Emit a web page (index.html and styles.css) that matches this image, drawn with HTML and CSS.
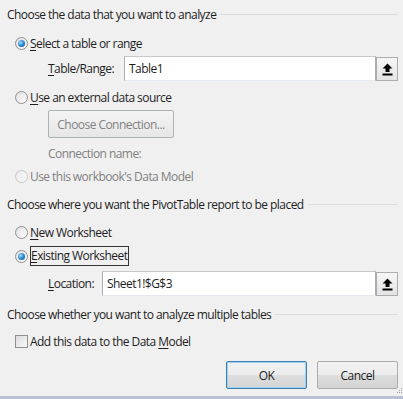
FILE: index.html
```html
<!DOCTYPE html>
<html lang="en">
<head>
    <meta charset="UTF-8">
    <title>Create PivotTable</title>
    <link rel="stylesheet" href="styles.css">
</head>
<body>
    <div class="dialog">
        <div class="group-title title-data"><span>Choose the data that you want to analyze</span></div>

        <div class="row radio-row row-select">
            <span class="radio checked"></span>
            <span><u>S</u>elect a table or range</span>
        </div>

        <div class="row field-row row-range">
            <label class="field-label label-range"><u>T</u>able/Range:</label>
            <div class="field">
                <div class="text-box">Table1</div>
                <button class="pick-button">
                    <svg width="11" height="13" viewBox="0 0 11 13"><path d="M5.5 0.5 L10.5 5.5 L7.5 5.5 L7.5 9 L3.5 9 L3.5 5.5 L0.5 5.5 Z" fill="#000"/><rect x="0.5" y="10.5" width="10" height="2" fill="#000"/></svg>
                </button>
            </div>
        </div>

        <div class="row radio-row row-external">
            <span class="radio"></span>
            <span><u>U</u>se an external data source</span>
        </div>

        <div class="row row-connection">
            <button class="push-button disabled conn-button">Choose Connection...</button>
        </div>

        <div class="row row-connname muted">Connection name:</div>

        <div class="row radio-row row-model muted">
            <span class="radio disabled"></span>
            <span>Use this workbook's Data Model</span>
        </div>

        <div class="group-title title-place"><span>Choose where you want the PivotTable report to be placed</span></div>

        <div class="row radio-row row-new">
            <span class="radio"></span>
            <span><u>N</u>ew Worksheet</span>
        </div>

        <div class="row radio-row row-existing">
            <span class="radio checked"></span>
            <span class="focus"><u>E</u>xisting Worksheet</span>
        </div>

        <div class="row field-row row-location">
            <label class="field-label label-location"><u>L</u>ocation:</label>
            <div class="field">
                <div class="text-box">Sheet1!$G$3</div>
                <button class="pick-button">
                    <svg width="11" height="13" viewBox="0 0 11 13"><path d="M5.5 0.5 L10.5 5.5 L7.5 5.5 L7.5 9 L3.5 9 L3.5 5.5 L0.5 5.5 Z" fill="#000"/><rect x="0.5" y="10.5" width="10" height="2" fill="#000"/></svg>
                </button>
            </div>
        </div>

        <div class="group-title title-multi"><span>Choose whether you want to analyze multiple tables</span></div>

        <div class="row radio-row row-check">
            <span class="checkbox"></span>
            <span>Add this data to the Data <u>M</u>odel</span>
        </div>

        <div class="button-bar">
            <button class="push-button default">OK</button>
            <button class="push-button">Cancel</button>
        </div>

        <div class="grip">
            <svg width="10" height="10" viewBox="0 0 10 10">
                <rect x="8" y="2" width="1" height="1" fill="#a0a0a0"/>
                <rect x="6" y="4" width="1" height="1" fill="#a0a0a0"/>
                <rect x="8" y="4" width="1" height="1" fill="#a0a0a0"/>
                <rect x="4" y="6" width="1" height="1" fill="#a0a0a0"/>
                <rect x="6" y="6" width="1" height="1" fill="#a0a0a0"/>
                <rect x="8" y="6" width="1" height="1" fill="#a0a0a0"/>
            </svg>
        </div>
    </div>
</body>
</html>
```

FILE: styles.css
```css
:root {
    --dialog-bg: #f0f0f0;
    --text: #1e1e1e;
    --muted: #808080;
    --rule: #dcdcdc;
    --box-border: #abadb3;
    --button-border: #acacac;
    --focus-blue: #3c7fb1;
}

* {
    margin: 0;
    padding: 0;
    box-sizing: border-box;
}

body {
    background-color: var(--dialog-bg);
    font-family: "Open Sans", "Noto Sans", sans-serif;
    font-size: 12px;
    letter-spacing: -0.55px;
    color: var(--text);
}

u {
    text-decoration-thickness: 1px;
    text-underline-offset: 2px;
}

.dialog {
    width: 403px;
    height: 399px;
    padding: 5px 5px 0 7px;
    position: relative;
    display: flex;
    flex-direction: column;
    border-bottom: 3px solid #b9c3cf;
}

/* Group headings with trailing rule */
.group-title {
    display: flex;
    align-items: center;
    height: 18px;
    gap: 4px;
}

.group-title::after {
    content: "";
    flex: 1;
    border-top: 1px solid var(--rule);
}

.row {
    display: flex;
    align-items: center;
    height: 18px;
}

.radio-row {
    padding-left: 8px;
    gap: 2px;
}

.row-select { margin-top: 11px; }
.row-range { margin-top: 4px; height: 25px; }
.row-external { margin-top: 7px; }
.row-connection { margin-top: 4px; height: 28px; padding-left: 41px; }
.row-connname { margin-top: 6px; padding-left: 41px; }
.row-model { margin-top: 5px; }
.title-place { margin-top: 10px; }
.row-new { margin-top: 10px; }
.row-existing { margin-top: 5px; height: 20px; }
.row-location { margin-top: 5px; height: 25px; }
.title-multi { margin-top: 9px; }
.row-check { margin-top: 9px; }

.muted {
    color: var(--muted);
}

/* Radio buttons */
.radio {
    width: 13px;
    height: 13px;
    border-radius: 50%;
    border: 1px solid #8f8f8f;
    background: linear-gradient(135deg, #e0e0e0, #ffffff);
    display: flex;
    align-items: center;
    justify-content: center;
    flex-shrink: 0;
}

.radio.checked::after {
    content: "";
    width: 7px;
    height: 7px;
    border-radius: 50%;
    background: radial-gradient(circle at 35% 35%, #9fd6ff, #1a7dc7 60%, #0b4f8a);
}

.radio.disabled {
    border-color: #c8c8c8;
    background: linear-gradient(135deg, #ececec, #f8f8f8);
}

.focus {
    border: 1px solid #333;
    padding: 1px 1px 1px 0;
    line-height: 16px;
}

.checkbox {
    width: 13px;
    height: 13px;
    border: 1px solid #8f8f8f;
    background: linear-gradient(135deg, #dcdcdc, #fafafa);
    flex-shrink: 0;
}

/* Text fields */
.field-row {
    padding-left: 41px;
}

.label-range { width: 76px; }
.label-location { width: 54px; }

.field {
    flex: 1;
    display: flex;
    height: 25px;
}

.text-box {
    flex: 1;
    background: #fff;
    border: 1px solid var(--box-border);
    border-top-color: #c8c8c8;
    border-bottom-color: #e3e9ef;
    padding: 0 4px;
    display: flex;
    align-items: center;
}

.pick-button {
    width: 22px;
    height: 24px;
    margin-top: 1px;
    border: 1px solid var(--button-border);
    background: linear-gradient(#f6f6f6, #e4e4e4);
    display: flex;
    align-items: center;
    justify-content: center;
}

/* Push buttons */
.push-button {
    font-family: inherit;
    font-size: 12px;
    letter-spacing: -0.55px;
    color: var(--text);
    height: 28px;
    border: 1px solid var(--button-border);
    border-radius: 2px;
    background: linear-gradient(#f2f2f2 0%, #ebebeb 50%, #dddddd 51%, #d4d4d4 100%);
}

.push-button.default {
    border-color: var(--focus-blue);
    box-shadow: inset 0 0 0 1px #9cd0f4;
}

.push-button.disabled {
    color: #838383;
    border-color: #adb2b5;
    background: linear-gradient(#f4f4f4, #e6e6e6);
}

.conn-button {
    width: 126px;
}

.button-bar {
    margin-top: 11px;
    display: flex;
    justify-content: flex-end;
    gap: 10px;
}

.button-bar .push-button {
    width: 81px;
}

.grip {
    position: absolute;
    right: 0;
    bottom: 0;
    line-height: 0;
}
```
